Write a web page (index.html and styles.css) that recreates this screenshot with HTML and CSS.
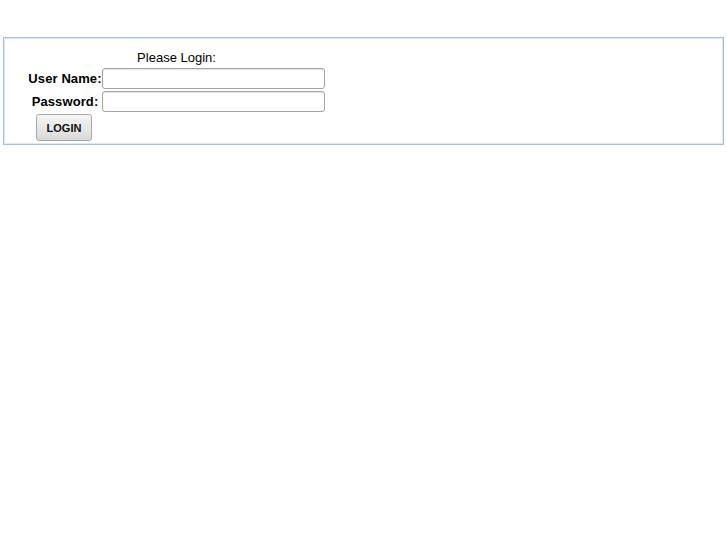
FILE: index.html
```html
<!DOCTYPE html>
<html>
<head>
<meta charset="utf-8">
<title>Login</title>
<link rel="stylesheet" href="styles.css">
</head>
<body>
<div class="panel">
  <form class="login">
    <div class="title">Please Login:</div>
    <label class="label" for="user">User Name:</label>
    <input class="field" id="user" type="text">
    <label class="label" for="pass">Password:</label>
    <input class="field" id="pass" type="password">
    <div class="actions"><button class="btn" type="button">LOGIN</button></div>
  </form>
</div>
</body>
</html>
```
FILE: styles.css
```css
html, body {
  margin: 0;
  padding: 0;
  background: #ffffff;
}
body {
  padding: 37px 3px 0 3px;
  font-family: "Liberation Sans", Arial, sans-serif;
  font-size: 13px;
  color: #000;
}
.panel {
  border: 1px solid #a3bfdc;
  box-shadow: inset 0 0 0 1px #dde8f4;
  padding: 12px 0 3px 24px;
}
.login {
  display: grid;
  grid-template-columns: 74px 223px;
  column-gap: 0;
  width: 297px;
}
.title {
  grid-column: 1 / 3;
  text-align: center;
  line-height: 15px;
  margin-bottom: 3px;
}
.label {
  font-weight: bold;
  text-align: center;
  line-height: 21px;
  height: 21px;
  letter-spacing: 0.1px;
}
.field {
  box-sizing: border-box;
  width: 223px;
  height: 21px;
  margin: 0 0 2px 0;
  padding: 0 3px;
  border: 1px solid #a4a4a4;
  border-radius: 3px;
  box-shadow: inset 0 1px 1px #e4e4e4;
  background: #fff;
  font: inherit;
}
.actions {
  grid-column: 1;
  display: flex;
  justify-content: flex-start;
  padding-left: 8px;
}
.btn {
  box-sizing: border-box;
  width: 56px;
  height: 27px;
  margin: 0;
  padding: 0;
  border: 1px solid #a8a8a8;
  border-radius: 3px;
  background: linear-gradient(#f6f6f6, #d9d9d9);
  font-family: "Liberation Sans", Arial, sans-serif;
  font-weight: bold;
  font-size: 11px;
  color: #111;
}
```
